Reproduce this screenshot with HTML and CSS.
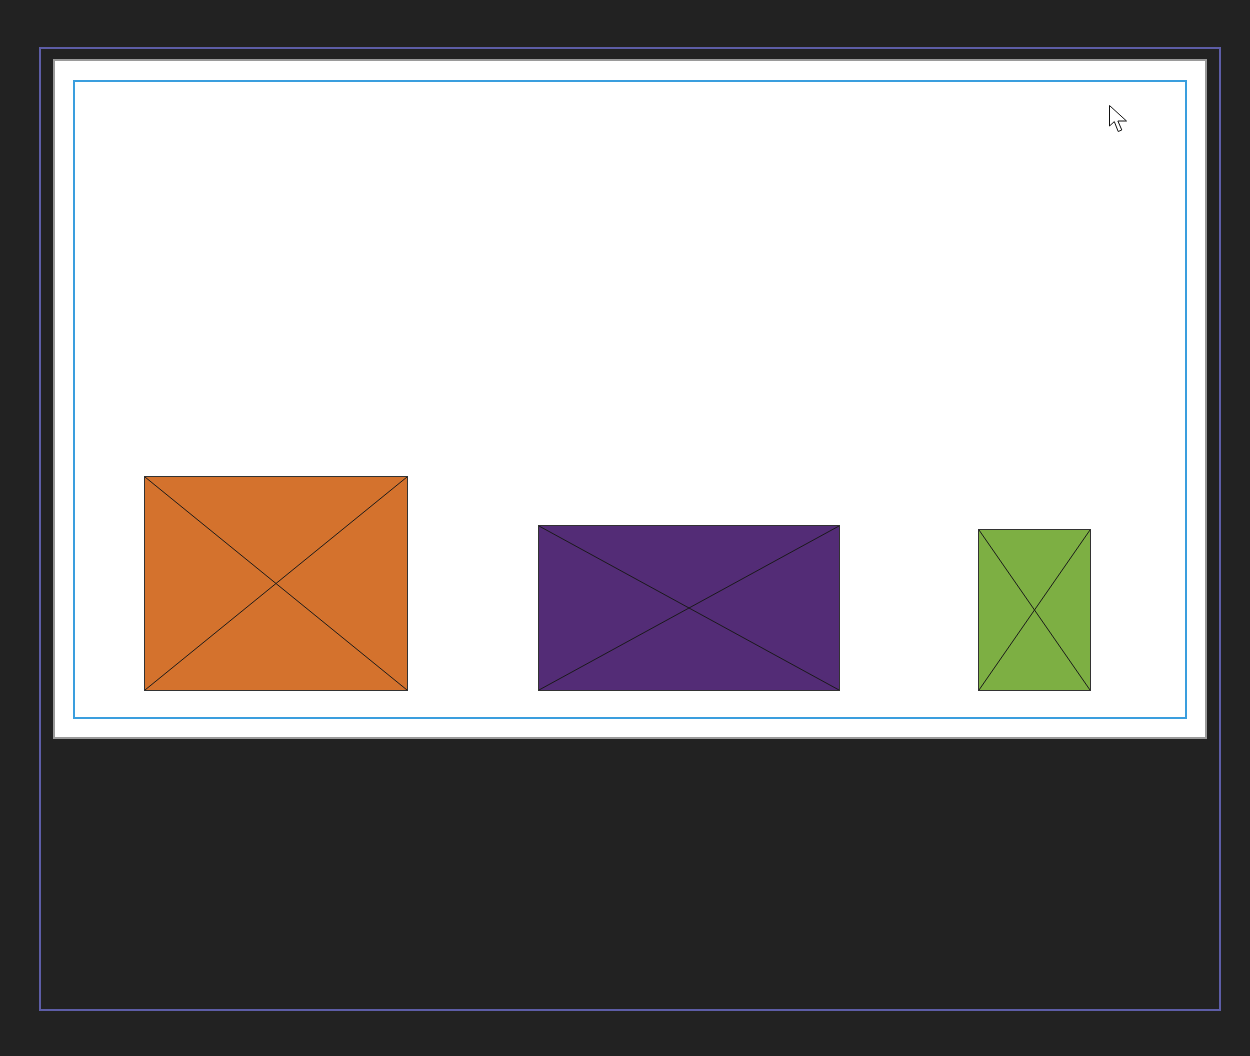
FILE: index.html
```html
<!DOCTYPE html>
<html>

<head>
    <title>Layout Preview</title>
    <meta name="viewport" content="width=device-width, initial-scale=1">
    <link rel="stylesheet" href="styles.css">
</head>

<body>
    <div class="frame">
        <div class="panel">
            <div class="stage">
                <div class="box box-orange">
                    <svg class="cross" viewBox="0 0 100 100" preserveAspectRatio="none">
                        <line x1="0" y1="0" x2="100" y2="100" />
                        <line x1="100" y1="0" x2="0" y2="100" />
                    </svg>
                </div>
                <div class="box box-purple">
                    <svg class="cross" viewBox="0 0 100 100" preserveAspectRatio="none">
                        <line x1="0" y1="0" x2="100" y2="100" />
                        <line x1="100" y1="0" x2="0" y2="100" />
                    </svg>
                </div>
                <div class="box box-green">
                    <svg class="cross" viewBox="0 0 100 100" preserveAspectRatio="none">
                        <line x1="0" y1="0" x2="100" y2="100" />
                        <line x1="100" y1="0" x2="0" y2="100" />
                    </svg>
                </div>

                <!-- mouse pointer over the stage -->
                <svg class="pointer" width="21" height="30" viewBox="0 0 21 30">
                    <path d="M1.5 1.5 L1.5 22 L6.3 17.6 L10.2 27.5 L13.8 26 L9.9 17 L18.5 17 Z" />
                </svg>
            </div>
        </div>
    </div>
</body>

</html>
```

FILE: styles.css
```css
* {
    box-sizing: border-box;
}

body {
    margin: 0;
    background: #222222;
    font-family: "Liberation Sans", Arial, sans-serif;
}

.frame {
    margin: 47px 0 0 39px;
    width: 1182px;
    height: 964px;
    border: 2px solid #5d5da6;
    padding: 10px 0 0 12px;
}

.panel {
    width: 1154px;
    height: 680px;
    background: #ffffff;
    border: 2px solid #9a9a9a;
    padding: 19px 18px 18px 18px;
}

.stage {
    position: relative;
    height: 100%;
    border: 2px solid #3a9ede;
    display: flex;
    align-items: flex-end;
    padding: 0 0 26px 69px;
}

.box {
    border: 1px solid #333333;
    flex-shrink: 0;
}

.cross {
    display: block;
    width: 100%;
    height: 100%;
}

.cross line {
    stroke: #1a1a1a;
    stroke-width: 1;
    vector-effect: non-scaling-stroke;
}

.box-orange {
    width: 264px;
    height: 215px;
    background: #d4722d;
}

.box-purple {
    width: 302px;
    height: 166px;
    background: #532c76;
    margin-left: 130px;
}

.box-green {
    width: 113px;
    height: 162px;
    background: #7daf43;
    margin-left: 138px;
}

.pointer {
    position: absolute;
    left: 1033px;
    top: 22px;
}

.pointer path {
    fill: #ffffff;
    stroke: #111111;
    stroke-width: 1;
    stroke-linejoin: miter;
}
```
